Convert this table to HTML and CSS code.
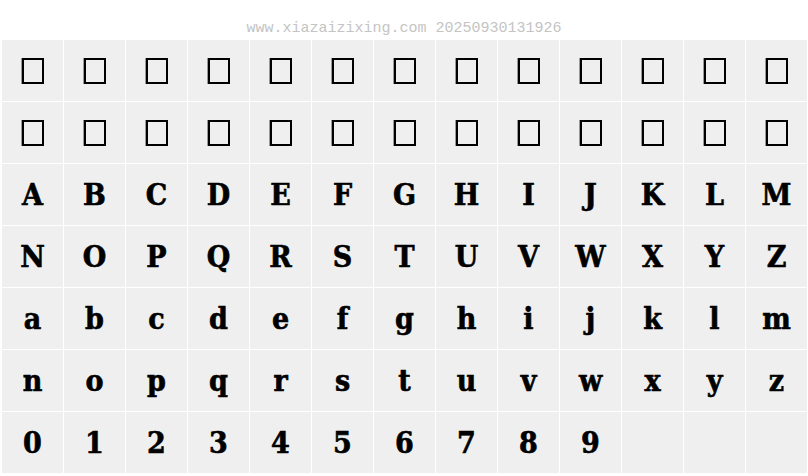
FILE: index.html
```html
<!DOCTYPE html>
<html lang="en">
<head>
<meta charset="UTF-8">
<title>Font preview</title>
<link rel="stylesheet" href="styles.css">
</head>
<body>
    <div class="stamp">www.xiazaizixing.com 20250930131926</div>
    <div class="grid">
        <div class="cell"><span class="tofu"></span></div>
        <div class="cell"><span class="tofu"></span></div>
        <div class="cell"><span class="tofu"></span></div>
        <div class="cell"><span class="tofu"></span></div>
        <div class="cell"><span class="tofu"></span></div>
        <div class="cell"><span class="tofu"></span></div>
        <div class="cell"><span class="tofu"></span></div>
        <div class="cell"><span class="tofu"></span></div>
        <div class="cell"><span class="tofu"></span></div>
        <div class="cell"><span class="tofu"></span></div>
        <div class="cell"><span class="tofu"></span></div>
        <div class="cell"><span class="tofu"></span></div>
        <div class="cell"><span class="tofu"></span></div>

        <div class="cell"><span class="tofu"></span></div>
        <div class="cell"><span class="tofu"></span></div>
        <div class="cell"><span class="tofu"></span></div>
        <div class="cell"><span class="tofu"></span></div>
        <div class="cell"><span class="tofu"></span></div>
        <div class="cell"><span class="tofu"></span></div>
        <div class="cell"><span class="tofu"></span></div>
        <div class="cell"><span class="tofu"></span></div>
        <div class="cell"><span class="tofu"></span></div>
        <div class="cell"><span class="tofu"></span></div>
        <div class="cell"><span class="tofu"></span></div>
        <div class="cell"><span class="tofu"></span></div>
        <div class="cell"><span class="tofu"></span></div>

        <div class="cell">A</div>
        <div class="cell">B</div>
        <div class="cell">C</div>
        <div class="cell">D</div>
        <div class="cell">E</div>
        <div class="cell">F</div>
        <div class="cell">G</div>
        <div class="cell">H</div>
        <div class="cell">I</div>
        <div class="cell">J</div>
        <div class="cell">K</div>
        <div class="cell">L</div>
        <div class="cell">M</div>

        <div class="cell">N</div>
        <div class="cell">O</div>
        <div class="cell">P</div>
        <div class="cell">Q</div>
        <div class="cell">R</div>
        <div class="cell">S</div>
        <div class="cell">T</div>
        <div class="cell">U</div>
        <div class="cell">V</div>
        <div class="cell">W</div>
        <div class="cell">X</div>
        <div class="cell">Y</div>
        <div class="cell">Z</div>

        <div class="cell">a</div>
        <div class="cell">b</div>
        <div class="cell">c</div>
        <div class="cell">d</div>
        <div class="cell">e</div>
        <div class="cell">f</div>
        <div class="cell">g</div>
        <div class="cell">h</div>
        <div class="cell">i</div>
        <div class="cell">j</div>
        <div class="cell">k</div>
        <div class="cell">l</div>
        <div class="cell">m</div>

        <div class="cell">n</div>
        <div class="cell">o</div>
        <div class="cell">p</div>
        <div class="cell">q</div>
        <div class="cell">r</div>
        <div class="cell">s</div>
        <div class="cell">t</div>
        <div class="cell">u</div>
        <div class="cell">v</div>
        <div class="cell">w</div>
        <div class="cell">x</div>
        <div class="cell">y</div>
        <div class="cell">z</div>

        <div class="cell">0</div>
        <div class="cell">1</div>
        <div class="cell">2</div>
        <div class="cell">3</div>
        <div class="cell">4</div>
        <div class="cell">5</div>
        <div class="cell">6</div>
        <div class="cell">7</div>
        <div class="cell">8</div>
        <div class="cell">9</div>
        <div class="cell"></div>
        <div class="cell"></div>
        <div class="cell"></div>
    </div>
</body>
</html>
```
FILE: styles.css
```css
body, html {
    margin: 0;
    padding: 0;
    background: #fff;
}

/* STAMP */
.stamp {
    height: 40px;
    box-sizing: border-box;
    padding-top: 20px;
    text-align: center;
    font-family: "Liberation Mono", monospace;
    font-size: 15px;
    line-height: 18px;
    color: #c4c4c4;
}

/* GLYPH GRID */
.grid {
    display: grid;
    grid-template-columns: repeat(13, 61px);
    grid-auto-rows: 61px;
    gap: 1px;
    padding-left: 2px;
}

.cell {
    display: flex;
    align-items: center;
    justify-content: center;
    background-color: #efefef;
    font-family: "DejaVu Serif Condensed", "DejaVu Serif", serif;
    font-weight: bold;
    font-size: 30px;
    color: #000;
    -webkit-text-stroke: 0.6px #000;
}

.tofu {
    display: block;
    width: 18px;
    height: 22px;
    border: 2px solid #000;
    box-shadow: -1px 0 0 #999;
}
```
